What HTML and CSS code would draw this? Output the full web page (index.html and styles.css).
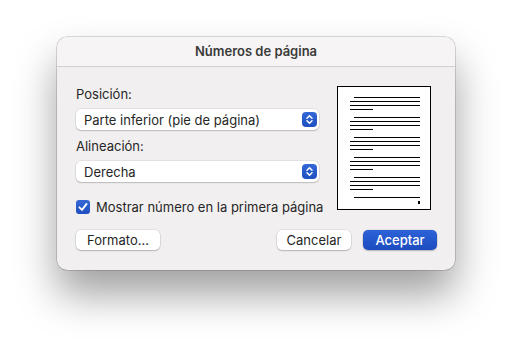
FILE: index.html
```html
<!DOCTYPE html>
<html lang="es">
<head>
  <meta charset="UTF-8">
  <title>Números de página</title>
  <link rel="stylesheet" href="styles.css">
</head>
<body>
  <div class="dialog">
    <div class="titlebar">Números de página</div>

    <div class="content">
      <div class="fields">
        <label class="label">Posición:</label>
        <div class="popup">
          <span>Parte inferior (pie de página)</span>
          <span class="stepper">
            <svg width="15" height="15" viewBox="0 0 15 15"><path d="M5 6.2 L7.5 3.8 L10 6.2 M5 8.8 L7.5 11.2 L10 8.8" fill="none" stroke="#fff" stroke-width="1.5" stroke-linecap="round" stroke-linejoin="round"/></svg>
          </span>
        </div>

        <label class="label second">Alineación:</label>
        <div class="popup">
          <span>Derecha</span>
          <span class="stepper">
            <svg width="15" height="15" viewBox="0 0 15 15"><path d="M5 6.2 L7.5 3.8 L10 6.2 M5 8.8 L7.5 11.2 L10 8.8" fill="none" stroke="#fff" stroke-width="1.5" stroke-linecap="round" stroke-linejoin="round"/></svg>
          </span>
        </div>

        <div class="check-row">
          <span class="checkbox">
            <svg width="14" height="14" viewBox="0 0 14 14"><path d="M3.4 7.3 L6 9.9 L10.6 3.9" fill="none" stroke="#fff" stroke-width="1.8" stroke-linecap="round" stroke-linejoin="round"/></svg>
          </span>
          <span>Mostrar número en la primera página</span>
        </div>
      </div>

      <div class="preview">
        <div class="para"><i class="ln indent"></i><i class="ln"></i><i class="ln"></i><i class="ln short"></i></div>
        <div class="para"><i class="ln indent"></i><i class="ln"></i><i class="ln"></i><i class="ln short"></i></div>
        <div class="para"><i class="ln indent"></i><i class="ln"></i><i class="ln"></i><i class="ln short"></i></div>
        <div class="para"><i class="ln indent"></i><i class="ln"></i><i class="ln"></i><i class="ln short"></i></div>
        <div class="para"><i class="ln indent"></i><i class="ln"></i><i class="ln"></i><i class="ln short"></i></div>
        <div class="para"><i class="ln indent"></i></div>
        <div class="pagenum"><i></i></div>
      </div>
    </div>

    <div class="footer">
      <button class="btn format">Formato...</button>
      <div class="spacer"></div>
      <button class="btn cancel">Cancelar</button>
      <button class="btn primary">Aceptar</button>
    </div>
  </div>
</body>
</html>
```

FILE: styles.css
```css
html, body {
  height: 100%;
}

body {
  margin: 0;
  padding: 37px 0 0 57px;
  box-sizing: border-box;
  min-height: 344px;
  background: #ffffff;
  font-family: Inter, 'Noto Sans', sans-serif;
  font-size: 13px;
  color: #262626;
}

.dialog {
  width: 398px;
  height: 233px;
  box-sizing: border-box;
  background: #f2eff0;
  border-radius: 10px;
  box-shadow: 0 0 0 0.5px rgba(0,0,0,0.28), 0 24px 42px rgba(0,0,0,0.38);
  display: flex;
  flex-direction: column;
}

.titlebar {
  height: 29px;
  line-height: 28px;
  text-align: center;
  font-weight: 600;
  color: #3a3a3a;
  border-bottom: 1px solid #d3d0d1;
  background: #f6f4f4;
  border-radius: 10px 10px 0 0;
}

.content {
  display: flex;
  padding: 19px 24px 0 19px;
}

.fields {
  width: 243px;
}

.label {
  display: block;
  height: 16px;
  line-height: 16px;
}

.label.second {
  margin-top: 8px;
}

.popup {
  margin-top: 7px;
  height: 21px;
  background: #ffffff;
  border-radius: 5px;
  box-shadow: 0 0 0 0.5px rgba(0,0,0,0.12), 0 1px 1.5px rgba(0,0,0,0.18);
  display: flex;
  align-items: center;
  justify-content: space-between;
  padding: 0 2px 0 8px;
}

.stepper {
  width: 15px;
  height: 15px;
  border-radius: 4px;
  background: linear-gradient(#3567d6, #1f4fc0);
  display: flex;
}

.check-row {
  margin-top: 17px;
  height: 16px;
  display: flex;
  align-items: center;
  gap: 6px;
  white-space: nowrap;
}

.checkbox {
  flex: none;
  width: 14px;
  height: 14px;
  border-radius: 3px;
  background: linear-gradient(#3567d6, #1f4fc0);
  display: flex;
}

.preview {
  flex: none;
  margin-left: 18px;
  width: 94px;
  height: 124px;
  box-sizing: border-box;
  background: #ffffff;
  border: 1px solid #000;
  padding: 10px 10px 0 12px;
  display: flex;
  flex-direction: column;
  gap: 7px;
}

.para {
  display: flex;
  flex-direction: column;
  gap: 3px;
}

.ln {
  display: block;
  height: 1px;
  background: #000;
}

.ln.indent {
  margin-left: 4px;
}

.ln.short {
  width: 23px;
}

.pagenum {
  display: flex;
  justify-content: flex-end;
  margin-top: -4px;
}

.pagenum i {
  width: 2px;
  height: 3px;
  background: #000;
}

.footer {
  display: flex;
  padding: 0 18px 0 19px;
  margin-top: 15px;
  gap: 12px;
}

.spacer {
  flex: 1;
}

.btn {
  height: 20px;
  padding: 0;
  font-family: inherit;
  font-size: 13px;
  color: #262626;
  background: #ffffff;
  border: none;
  border-radius: 5px;
  box-shadow: 0 0 0 0.5px rgba(0,0,0,0.12), 0 1px 1.5px rgba(0,0,0,0.2);
}

.btn.format {
  width: 84px;
}

.btn.cancel {
  width: 74px;
}

.btn.primary {
  width: 74px;
  color: #ffffff;
  font-weight: 500;
  background: linear-gradient(#2d62d8, #1c4cbf);
}
```
